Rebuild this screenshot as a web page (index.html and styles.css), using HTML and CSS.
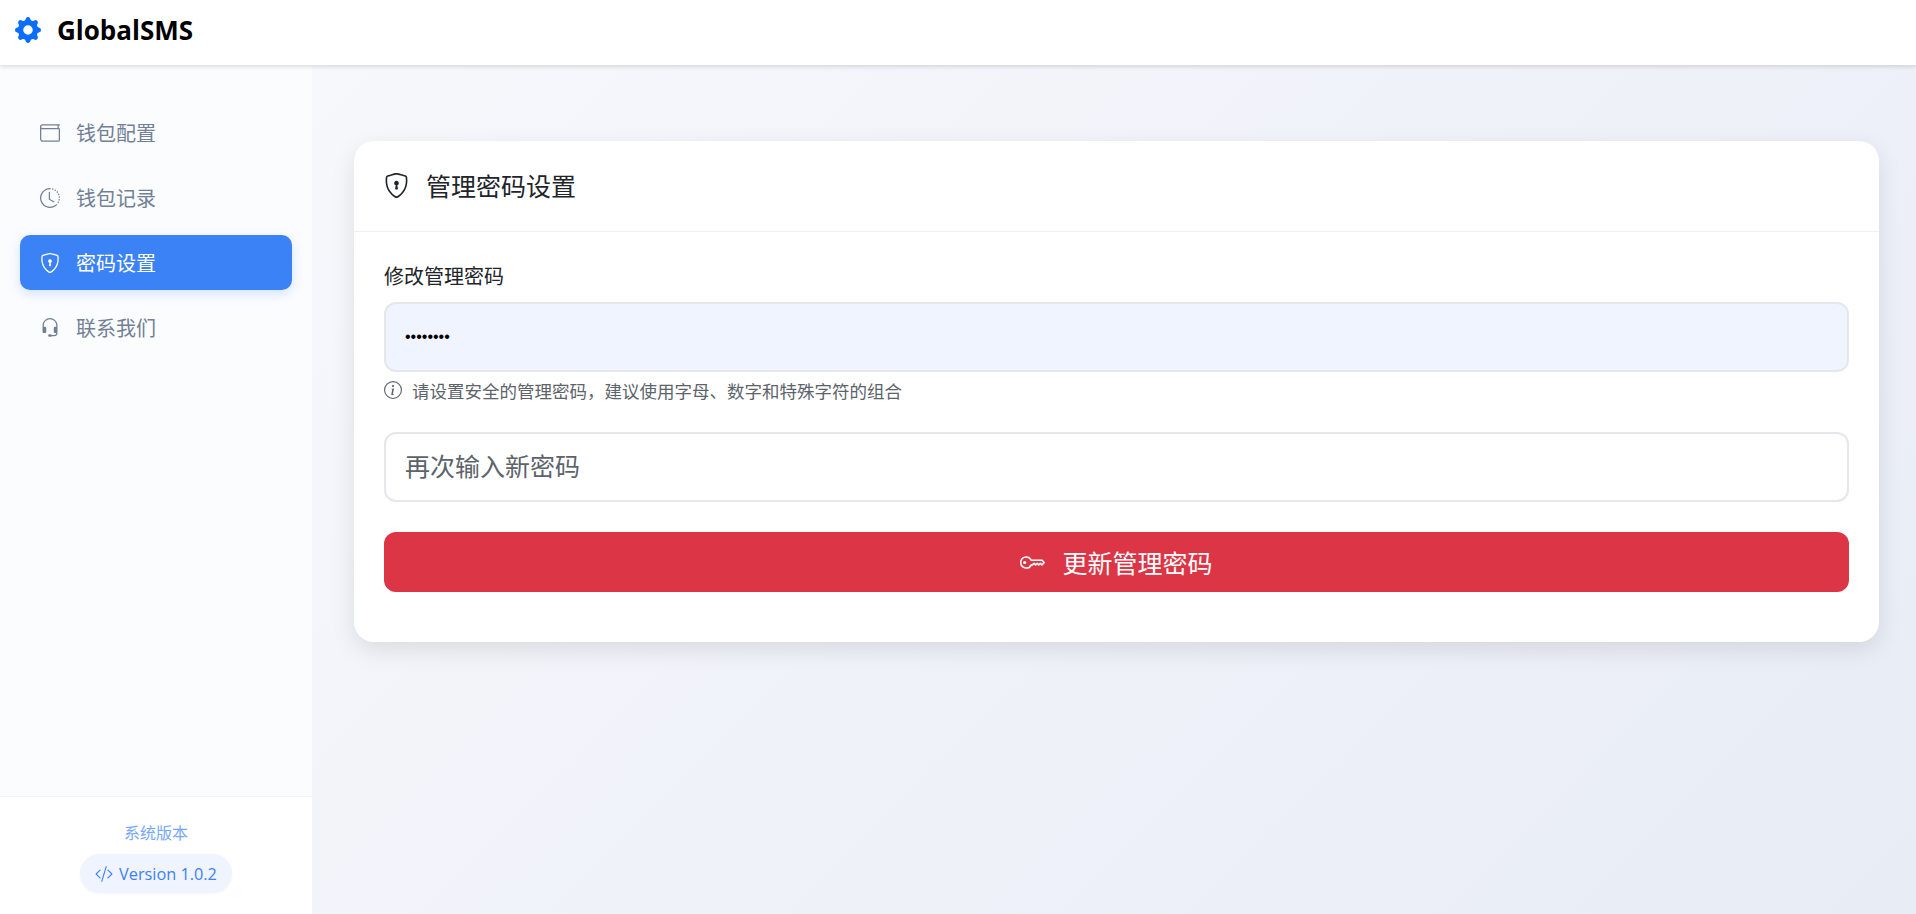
FILE: index.html
```html
<!DOCTYPE html>
<html lang="zh-CN">
<head>
<meta charset="utf-8">
<title>GlobalSMS</title>
<link rel="stylesheet" href="styles.css">
</head>
<body>
<header class="topbar">
  <svg class="brand-icon" viewBox="0 0 16 16" fill="currentColor"><path d="M9.405 1.05c-.413-1.4-2.397-1.4-2.81 0l-.1.34a1.464 1.464 0 0 1-2.105.872l-.31-.17c-1.283-.698-2.686.705-1.987 1.987l.169.311c.446.82.023 1.841-.872 2.105l-.34.1c-1.4.413-1.4 2.397 0 2.81l.34.1a1.464 1.464 0 0 1 .872 2.105l-.17.31c-.698 1.283.705 2.686 1.987 1.987l.311-.169a1.464 1.464 0 0 1 2.105.872l.1.34c.413 1.4 2.397 1.4 2.81 0l.1-.34a1.464 1.464 0 0 1 2.105-.872l.31.17c1.283.698 2.686-.705 1.987-1.987l-.169-.311a1.464 1.464 0 0 1 .872-2.105l.34-.1c1.4-.413 1.4-2.397 0-2.81l-.34-.1a1.464 1.464 0 0 1-.872-2.105l.17-.31c.698-1.283-.705-2.686-1.987-1.987l-.311.169a1.464 1.464 0 0 1-2.105-.872l-.1-.34zM8 10.93a2.929 2.929 0 1 1 0-5.86 2.929 2.929 0 0 1 0 5.858z"/></svg>
  <span class="brand-name">GlobalSMS</span>
</header>
<div class="shell">
  <aside class="sidebar">
    <nav class="nav">
      <a class="nav-item">
        <svg class="nav-icon" viewBox="0 0 16 16" fill="currentColor"><path d="M0 3a2 2 0 0 1 2-2h13.5a.5.5 0 0 1 0 1H15v2a1 1 0 0 1 1 1v8.5a1.5 1.5 0 0 1-1.5 1.5h-12A2.5 2.5 0 0 1 0 12.5V3zm1 1.732V12.5A1.5 1.5 0 0 0 2.5 14h12a.5.5 0 0 0 .5-.5V5H2a1.99 1.99 0 0 1-1-.268zM1 3a1 1 0 0 0 1 1h12V2H2a1 1 0 0 0-1 1z"/></svg>
        <span>钱包配置</span>
      </a>
      <a class="nav-item">
        <svg class="nav-icon" viewBox="0 0 16 16" fill="currentColor"><path d="M8.515 1.019A7 7 0 0 0 8 1V0a8 8 0 0 1 .589.022l-.074.997zm2.004.45a7.003 7.003 0 0 0-.985-.299l.219-.976c.383.086.76.2 1.126.342l-.36.933zm1.37.71a7.01 7.01 0 0 0-.439-.27l.493-.87a8.025 8.025 0 0 1 .979.654l-.615.789a6.996 6.996 0 0 0-.418-.302zm1.834 1.79a6.99 6.99 0 0 0-.653-.796l.724-.69c.27.285.52.59.747.91l-.818.576zm.744 1.352a7.08 7.08 0 0 0-.214-.468l.893-.45a7.976 7.976 0 0 1 .45 1.088l-.95.313a7.023 7.023 0 0 0-.179-.483zm.53 2.507a6.991 6.991 0 0 0-.1-1.025l.985-.17c.067.386.106.778.116 1.17l-1 .025zm-.131 1.538c.033-.17.06-.339.081-.51l.993.123a7.957 7.957 0 0 1-.23 1.155l-.964-.267c.046-.165.086-.332.12-.501zm-.952 2.379c.184-.29.346-.594.486-.908l.914.405c-.16.36-.345.706-.555 1.038l-.845-.535zm-.964 1.205c.122-.122.239-.248.35-.378l.758.653a8.073 8.073 0 0 1-.401.432l-.707-.707z"/><path d="M8 1a7 7 0 1 0 4.95 11.95l.707.707A8.001 8.001 0 1 1 8 0v1z"/><path d="M7.5 3a.5.5 0 0 1 .5.5v5.21l3.248 1.856a.5.5 0 0 1-.496.868l-3.5-2A.5.5 0 0 1 7 9V3.5a.5.5 0 0 1 .5-.5z"/></svg>
        <span>钱包记录</span>
      </a>
      <a class="nav-item active">
        <svg class="nav-icon" viewBox="0 0 16 16" fill="currentColor"><path d="M5.338 1.59a61.44 61.44 0 0 0-2.837.856.481.481 0 0 0-.328.39c-.554 4.157.726 7.19 2.253 9.188a10.725 10.725 0 0 0 2.287 2.233c.346.244.652.42.893.533.12.057.218.095.293.118a.55.55 0 0 0 .101.025.615.615 0 0 0 .1-.025c.076-.023.174-.061.294-.118.24-.113.547-.29.893-.533a10.726 10.726 0 0 0 2.287-2.233c1.527-1.997 2.807-5.031 2.253-9.188a.48.48 0 0 0-.328-.39c-.651-.213-1.75-.56-2.837-.855C9.552 1.29 8.531 1.067 8 1.067c-.53 0-1.552.223-2.662.524zM5.072.56C6.157.265 7.31 0 8 0s1.843.265 2.928.56c1.11.3 2.229.655 2.887.87a1.54 1.54 0 0 1 1.044 1.262c.596 4.477-.787 7.795-2.465 9.99a11.775 11.775 0 0 1-2.517 2.453 7.159 7.159 0 0 1-1.048.625c-.28.132-.581.24-.829.24s-.548-.108-.829-.24a7.158 7.158 0 0 1-1.048-.625 11.777 11.777 0 0 1-2.517-2.453C1.928 10.487.545 7.169 1.141 2.692A1.54 1.54 0 0 1 2.185 1.43 62.456 62.456 0 0 1 5.072.56z"/><path d="M9.5 6.5a1.5 1.5 0 0 1-1 1.415l.385 1.99a.5.5 0 0 1-.491.595h-.788a.5.5 0 0 1-.49-.595l.384-1.99a1.5 1.5 0 1 1 2-1.415z"/></svg>
        <span>密码设置</span>
      </a>
      <a class="nav-item">
        <svg class="nav-icon" viewBox="0 0 16 16" fill="currentColor"><path d="M8 1a5 5 0 0 0-5 5v1h1a1 1 0 0 1 1 1v3a1 1 0 0 1-1 1H3a1 1 0 0 1-1-1V6a6 6 0 1 1 12 0v6a2.5 2.5 0 0 1-2.5 2.5H9.366a1 1 0 0 1-.866.5h-1a1 1 0 1 1 0-2h1a1 1 0 0 1 .866.5H11.5A1.5 1.5 0 0 0 13 12h-1a1 1 0 0 1-1-1V8a1 1 0 0 1 1-1h1V6a5 5 0 0 0-5-5z"/></svg>
        <span>联系我们</span>
      </a>
    </nav>
    <div class="version-box">
      <div class="version-label">系统版本</div>
      <div class="version-pill">
        <svg class="pill-icon" viewBox="0 0 16 16" fill="currentColor"><path d="M10.478 1.647a.5.5 0 1 0-.956-.294l-4 13a.5.5 0 0 0 .956.294l4-13zM4.854 4.146a.5.5 0 0 1 0 .708L1.707 8l3.147 3.146a.5.5 0 0 1-.708.708l-3.5-3.5a.5.5 0 0 1 0-.708l3.5-3.5a.5.5 0 0 1 .708 0zm6.292 0a.5.5 0 0 0 0 .708L14.293 8l-3.147 3.146a.5.5 0 0 0 .708.708l3.5-3.5a.5.5 0 0 0 0-.708l-3.5-3.5a.5.5 0 0 0-.708 0z"/></svg>
        <span>Version 1.0.2</span>
      </div>
    </div>
  </aside>
  <main class="main">
    <section class="card">
      <div class="card-head">
        <svg class="head-icon" viewBox="0 0 16 16" fill="currentColor"><path d="M5.338 1.59a61.44 61.44 0 0 0-2.837.856.481.481 0 0 0-.328.39c-.554 4.157.726 7.19 2.253 9.188a10.725 10.725 0 0 0 2.287 2.233c.346.244.652.42.893.533.12.057.218.095.293.118a.55.55 0 0 0 .101.025.615.615 0 0 0 .1-.025c.076-.023.174-.061.294-.118.24-.113.547-.29.893-.533a10.726 10.726 0 0 0 2.287-2.233c1.527-1.997 2.807-5.031 2.253-9.188a.48.48 0 0 0-.328-.39c-.651-.213-1.75-.56-2.837-.855C9.552 1.29 8.531 1.067 8 1.067c-.53 0-1.552.223-2.662.524zM5.072.56C6.157.265 7.31 0 8 0s1.843.265 2.928.56c1.11.3 2.229.655 2.887.87a1.54 1.54 0 0 1 1.044 1.262c.596 4.477-.787 7.795-2.465 9.99a11.775 11.775 0 0 1-2.517 2.453 7.159 7.159 0 0 1-1.048.625c-.28.132-.581.24-.829.24s-.548-.108-.829-.24a7.158 7.158 0 0 1-1.048-.625 11.777 11.777 0 0 1-2.517-2.453C1.928 10.487.545 7.169 1.141 2.692A1.54 1.54 0 0 1 2.185 1.43 62.456 62.456 0 0 1 5.072.56z"/><path d="M9.5 6.5a1.5 1.5 0 0 1-1 1.415l.385 1.99a.5.5 0 0 1-.491.595h-.788a.5.5 0 0 1-.49-.595l.384-1.99a1.5 1.5 0 1 1 2-1.415z"/></svg>
        <h1 class="card-title">管理密码设置</h1>
      </div>
      <form class="card-body">
        <div class="field">
          <label class="field-label" for="pw">修改管理密码</label>
          <input class="input filled" id="pw" type="password" value="12345678">
          <div class="hint">
            <svg class="hint-icon" viewBox="0 0 16 16" fill="currentColor"><path d="M8 15A7 7 0 1 1 8 1a7 7 0 0 1 0 14zm0 1A8 8 0 1 0 8 0a8 8 0 0 0 0 16z"/><path d="m8.93 6.588-2.29.287-.082.38.45.083c.294.07.352.176.288.469l-.738 3.468c-.194.897.105 1.319.808 1.319.545 0 1.178-.252 1.465-.598l.088-.416c-.2.176-.492.246-.686.246-.275 0-.375-.193-.304-.533L8.93 6.588zM9 4.5a1 1 0 1 1-2 0 1 1 0 0 1 2 0z"/></svg>
            <span>请设置安全的管理密码，建议使用字母、数字和特殊字符的组合</span>
          </div>
        </div>
        <input class="input" type="password" placeholder="再次输入新密码">
        <button class="submit" type="button">
          <svg class="btn-icon" viewBox="0 0 16 16" fill="currentColor"><path d="M0 8a4 4 0 0 1 7.465-2H14a.5.5 0 0 1 .354.146l1.5 1.5a.5.5 0 0 1 0 .708l-1.5 1.5a.5.5 0 0 1-.708 0L13 9.207l-.646.647a.5.5 0 0 1-.708 0L11 9.207l-.646.647a.5.5 0 0 1-.708 0L9 9.207l-.646.647A.5.5 0 0 1 8 10h-.535A4 4 0 0 1 0 8zm4-3a3 3 0 1 0 2.712 4.285A.5.5 0 0 1 7.163 9h.63l.853-.854a.5.5 0 0 1 .708 0l.646.647.646-.647a.5.5 0 0 1 .708 0l.646.647.646-.647a.5.5 0 0 1 .708 0l.646.647.793-.793-1-1h-6.63a.5.5 0 0 1-.451-.285A3 3 0 0 0 4 5z"/><path d="M4 8a1 1 0 1 1-2 0 1 1 0 0 1 2 0z"/></svg>
          <span>更新管理密码</span>
        </button>
      </form>
    </section>
  </main>
</div>
</body>
</html>
```
FILE: styles.css
```css
* { box-sizing: border-box; }
html, body { height: 100%; }
body {
  margin: 0;
  display: flex;
  flex-direction: column;
  overflow: hidden;
  font-family: "Liberation Sans", "Noto Sans CJK SC", sans-serif;
  color: #212529;
  background: #fff;
}
.topbar {
  position: relative;
  z-index: 2;
  flex: 0 0 65px;
  display: flex;
  align-items: center;
  gap: 16px;
  padding: 0 15px 5px;
  background: #fff;
  box-shadow: 0 2px 4px rgba(0, 0, 0, .12);
}
.brand-icon { width: 26px; height: 26px; color: #0d6efd; }
.brand-name { font: 700 26px "Open Sans", sans-serif; color: #000; }
.shell { flex: 1; display: flex; min-height: 0; }
.sidebar {
  flex: 0 0 312px;
  display: flex;
  flex-direction: column;
  background: #fbfcfe;
}
.nav {
  flex: 1;
  display: flex;
  flex-direction: column;
  gap: 10px;
  padding: 40px 20px 0;
}
.nav-item {
  height: 55px;
  display: flex;
  align-items: center;
  gap: 16px;
  padding: 0 20px;
  border-radius: 10px;
  font-size: 20px;
  color: #718096;
}
.nav-item.active {
  background: #3b82f6;
  color: #fff;
  box-shadow: 0 4px 12px rgba(59, 130, 246, .2);
}
.nav-icon { width: 20px; height: 20px; flex: none; }
.version-box {
  flex: 0 0 118px;
  display: flex;
  flex-direction: column;
  align-items: center;
  gap: 10px;
  padding-top: 27px;
  background: #fff;
  border-top: 1px solid #f1f3f7;
}
.version-label { font-size: 16px; line-height: 20px; color: #3b82f6; opacity: .7; }
.version-pill {
  height: 39px;
  display: flex;
  align-items: center;
  gap: 6px;
  padding: 0 15px;
  border-radius: 20px;
  background: #eff4fe;
  color: #3b82f6;
  font: 16.3px "Open Sans", sans-serif;
  box-shadow: 0 1px 3px rgba(0, 0, 0, .04);
}
.pill-icon { width: 18px; height: 18px; }
.main {
  flex: 1;
  min-width: 0;
  padding: 76px 37px 0 42px;
  background: linear-gradient(135deg, #f6f8fc 0%, #e8ecf5 100%);
}
.card {
  height: 501px;
  background: #fff;
  border-radius: 20px;
  box-shadow: 0 8px 24px rgba(0, 0, 0, .1);
}
.card-head {
  height: 91px;
  display: flex;
  align-items: center;
  gap: 17px;
  padding: 0 30px 2px;
  border-bottom: 1px solid #f0f1f4;
}
.head-icon { width: 25px; height: 25px; color: #212529; }
.card-title { margin: 0; font-size: 25px; font-weight: 400; color: #212529; }
.card-body {
  display: flex;
  flex-direction: column;
  padding: 33px 30px 0;
}
.field { display: flex; flex-direction: column; }
.field-label { font-size: 20px; line-height: 24px; margin-bottom: 13px; color: #212529; }
.input {
  width: 100%;
  height: 70px;
  padding: 0 19px;
  border: 2px solid #e6e7ea;
  border-radius: 12px;
  background: #fff;
  font-size: 25px;
  font-family: inherit;
  color: #000;
  outline: 0;
}
.input::placeholder { color: #5c636a; opacity: 1; }
.input.filled { background: #f0f4fe; font-size: 16px; }
.hint {
  display: flex;
  align-items: center;
  gap: 10px;
  margin-top: 6px;
  margin-bottom: 30px;
  height: 24px;
  font-size: 17.5px;
  color: #5c636a;
}
.hint-icon { width: 18px; height: 18px; flex: none; }
.submit {
  margin-top: 30px;
  height: 60px;
  display: flex;
  align-items: center;
  justify-content: center;
  gap: 17px;
  border: 0;
  border-radius: 12px;
  background: #dc3545;
  color: #fff;
  font-size: 25px;
  font-family: inherit;
}
.btn-icon { width: 25px; height: 25px; }
```
